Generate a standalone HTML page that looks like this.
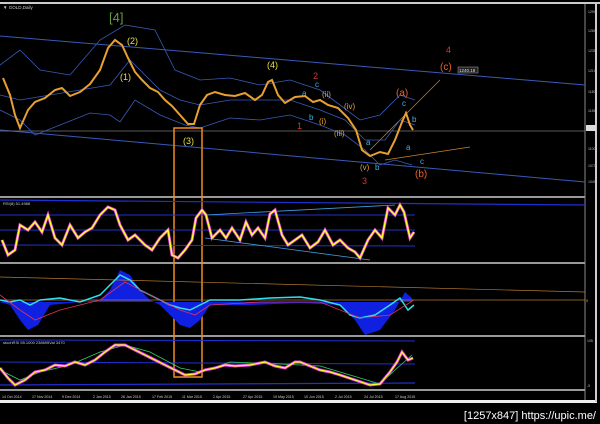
<!DOCTYPE html>
<html><head><style>
html,body{margin:0;padding:0;background:#000;width:600px;height:424px;overflow:hidden}
svg{display:block}
text{font-family:"Liberation Sans",sans-serif}
</style></head><body>
<svg width="600" height="424" viewBox="0 0 600 424">
<rect width="600" height="424" fill="#000"/>
<!-- frame -->
<rect x="0" y="2" width="600" height="2" fill="#ccc"/>
<rect x="0" y="400" width="597" height="3" fill="#eee"/>
<rect x="595" y="2" width="2" height="400" fill="#ccc"/>
<line x1="585" y1="4" x2="585" y2="400" stroke="#888" stroke-width="1"/>
<line x1="0" y1="197" x2="585" y2="197" stroke="#999" stroke-width="2"/>
<line x1="0" y1="263" x2="585" y2="263" stroke="#999" stroke-width="2"/>
<line x1="0" y1="336" x2="585" y2="336" stroke="#999" stroke-width="2"/>
<line x1="0" y1="390" x2="585" y2="390" stroke="#999" stroke-width="2"/>
<text x="3" y="9" font-size="4.5" fill="#ccc">▼ GOLD,Daily</text>
<!-- main panel channel -->
<line x1="0" y1="36" x2="585" y2="85" stroke="#3a5ab8" stroke-width="1"/>
<line x1="0" y1="130" x2="585" y2="182" stroke="#3a5ab8" stroke-width="1"/>
<line x1="0" y1="131" x2="585" y2="131" stroke="#777" stroke-width="0.7"/>
<line x1="385" y1="160" x2="470" y2="147" stroke="#c8842c" stroke-width="0.7"/>
<line x1="370" y1="150" x2="440" y2="80" stroke="#c8842c" stroke-width="0.7"/>
<!-- bollinger -->
<polyline fill="none" stroke="#3a5ab8" stroke-width="0.8" points="0,65 20,50 40,70 70,75 100,40 125,25 155,30 175,70 200,80 230,78 260,85 290,80 320,90 340,105 360,120 380,115 400,95 415,100"/>
<polyline fill="none" stroke="#3a5ab8" stroke-width="0.8" points="0,95 20,100 50,95 80,90 110,85 130,60 160,90 180,100 200,105 230,100 260,100 290,100 320,110 345,120 365,140 385,140 400,120 415,125"/>
<polyline fill="none" stroke="#3a5ab8" stroke-width="0.8" points="0,110 20,120 35,135 60,125 90,113 110,115 120,122 135,100 160,115 185,125 200,128 230,118 260,120 290,115 320,125 345,135 365,150 380,165 395,160 412,165"/>
<!-- price -->
<polyline fill="none" stroke="#e8a030" stroke-width="2" points="3,78 10,95 15,115 20,128 28,110 35,102 45,98 55,90 62,88 70,96 80,92 90,84 100,70 108,48 115,40 122,45 128,58 135,72 142,80 150,88 158,92 165,100 172,106 180,115 188,124 194,124 200,105 207,95 215,92 225,95 235,96 245,93 255,100 262,95 268,82 272,80 278,95 285,103 295,97 305,96 313,102 320,100 328,105 338,108 348,118 356,130 362,150 370,156 380,152 388,154 395,140 402,122 406,113 410,125 413,130"/>
<!-- wave labels -->
<text x="109" y="22" font-size="13" fill="#6a9a40" font-family="Liberation Serif">[4]</text>
<text x="127" y="44" font-size="9" fill="#e8e040">(2)</text>
<text x="120" y="80" font-size="9" fill="#e8e040">(1)</text>
<text x="183" y="144" font-size="9" fill="#e8e040">(3)</text>
<text x="267" y="68" font-size="9" fill="#e8e040">(4)</text>
<text x="313" y="79" font-size="9" fill="#e03030">2</text>
<text x="297" y="129" font-size="9" fill="#e03030">1</text>
<text x="362" y="184" font-size="9" fill="#e03030">3</text>
<text x="446" y="53" font-size="9" fill="#e03030">4</text>
<text x="440" y="70" font-size="10" fill="#ee6020">(c)</text>
<text x="396" y="96" font-size="10" fill="#ee6020">(a)</text>
<text x="415" y="177" font-size="10" fill="#ee6020">(b)</text>
<text x="322" y="97" font-size="8" fill="#e8a030">(ii)</text>
<text x="319" y="124" font-size="8" fill="#e8a030">(i)</text>
<text x="344" y="109" font-size="8" fill="#e8a030">(iv)</text>
<text x="334" y="136" font-size="8" fill="#e8a030">(iii)</text>
<text x="360" y="170" font-size="8" fill="#e8a030">(v)</text>
<g font-size="8" fill="#40b0e0">
<text x="302" y="96">a</text><text x="309" y="120">b</text><text x="315" y="87">c</text>
<text x="366" y="145">a</text><text x="375" y="170">b</text><text x="402" y="106">c</text>
<text x="412" y="122">b</text><text x="406" y="150">a</text><text x="420" y="164">c</text>
</g>
<rect x="458" y="67" width="20" height="6" fill="#222" stroke="#aaa" stroke-width="0.5"/>
<text x="459" y="72" font-size="4.5" fill="#ddd">1240.18</text>
<rect x="586" y="125" width="10" height="6" fill="#ddd"/>
<g font-size="3.5" fill="#bbb">
<text x="588" y="13">1290</text><text x="588" y="32">1265</text><text x="588" y="52">1235</text>
<text x="588" y="72">1210</text><text x="588" y="93">1180</text><text x="588" y="112">1155</text>
<text x="588" y="150">1100</text><text x="588" y="167">1070</text><text x="588" y="183">1045</text>
</g>
<!-- orange box -->
<rect x="174" y="128" width="28" height="249" fill="none" stroke="#f08a20" stroke-width="1.5"/>
<!-- RSI panel -->
<text x="3" y="205" font-size="4" fill="#ccc">RSI(8) 51.4988</text>
<line x1="0" y1="200" x2="585" y2="205" stroke="#2030d0" stroke-width="1.2"/>
<line x1="0" y1="215" x2="415" y2="215" stroke="#2030d0" stroke-width="1"/>
<line x1="0" y1="230" x2="415" y2="230" stroke="#2030d0" stroke-width="1"/>
<line x1="0" y1="245" x2="415" y2="246" stroke="#2030d0" stroke-width="1"/>
<line x1="205" y1="215" x2="395" y2="205" stroke="#40a0e0" stroke-width="0.8"/>
<line x1="205" y1="238" x2="370" y2="260" stroke="#40a0e0" stroke-width="0.8"/>
<polyline fill="none" stroke="#e040e0" stroke-width="3" points="2,240 8,255 15,250 20,225 28,230 35,222 42,232 48,215 55,238 62,245 70,225 78,238 85,232 92,228 100,215 108,207 115,210 120,225 128,240 135,235 145,245 152,250 160,238 168,230 172,255 178,258 185,250 192,240 196,218 202,210 206,215 212,238 220,230 226,238 232,228 240,240 246,222 252,235 258,228 265,238 270,214 275,210 282,235 288,245 295,240 302,235 310,248 318,242 325,230 333,245 340,240 348,248 355,252 360,258 368,240 375,230 382,238 388,208 395,215 400,205 404,212 410,238 414,232"/>
<polyline fill="none" stroke="#ffff30" stroke-width="1.5" points="2,240 8,255 15,250 20,225 28,230 35,222 42,232 48,215 55,238 62,245 70,225 78,238 85,232 92,228 100,215 108,207 115,210 120,225 128,240 135,235 145,245 152,250 160,238 168,230 172,255 178,258 185,250 192,240 196,218 202,210 206,215 212,238 220,230 226,238 232,228 240,240 246,222 252,235 258,228 265,238 270,214 275,210 282,235 288,245 295,240 302,235 310,248 318,242 325,230 333,245 340,240 348,248 355,252 360,258 368,240 375,230 382,238 388,208 395,215 400,205 404,212 410,238 414,232"/>
<!-- MACD panel -->
<path d="M0,302 L10,305 20,320 28,330 38,325 50,305 100,300 110,290 120,270 130,275 140,290 150,300 160,305 170,315 180,325 190,328 200,320 210,305 250,305 300,303 340,305 355,320 365,335 380,330 395,310 405,292 412,298 L412,302 L0,302 Z" fill="#1020e0"/>
<line x1="0" y1="277" x2="585" y2="292" stroke="#b07830" stroke-width="0.7"/>
<line x1="0" y1="300" x2="585" y2="300" stroke="#b07830" stroke-width="0.8"/>
<polyline fill="none" stroke="#30e0f0" stroke-width="1.5" points="0,300 10,302 20,300 30,305 40,300 60,298 80,302 100,295 110,285 120,275 130,280 140,290 150,295 160,300 170,305 180,308 190,310 200,305 210,300 240,300 270,298 300,297 320,300 340,305 350,315 360,318 375,315 390,305 400,298 408,310 414,305"/>
<polyline fill="none" stroke="#e03060" stroke-width="0.8" points="0,295 20,310 35,320 60,310 100,300 125,282 150,295 180,310 195,315 210,305 260,302 320,302 360,318 390,315 414,300"/>
<text x="586" y="302" font-size="4" fill="#e8a030">0</text>
<!-- Stoch panel -->
<text x="3" y="344" font-size="4" fill="#ccc">stochRSI 55.1000 238695Val 3470</text>
<line x1="0" y1="340" x2="415" y2="341" stroke="#2030d0" stroke-width="1"/>
<line x1="0" y1="362" x2="415" y2="364" stroke="#2030d0" stroke-width="1"/>
<line x1="0" y1="385" x2="415" y2="383" stroke="#2030d0" stroke-width="1.2"/>
<polyline fill="none" stroke="#30d060" stroke-width="0.8" points="0,370 20,380 40,372 70,365 100,352 125,345 150,352 180,368 200,372 230,362 280,364 320,366 350,375 380,384 395,370 412,355"/>
<polyline fill="none" stroke="#e040e0" stroke-width="3" points="0,368 8,378 15,385 25,380 35,372 45,370 55,365 65,366 75,362 85,365 95,360 105,352 115,345 125,345 135,350 145,355 155,360 165,365 175,370 185,375 195,374 205,370 215,368 225,365 235,366 250,365 265,362 275,366 285,368 295,362 300,362 310,366 320,370 330,372 340,375 355,380 370,385 380,384 390,372 397,362 402,352 408,360 413,358"/>
<polyline fill="none" stroke="#ffff30" stroke-width="1.2" points="0,368 8,378 15,385 25,380 35,372 45,370 55,365 65,366 75,362 85,365 95,360 105,352 115,345 125,345 135,350 145,355 155,360 165,365 175,370 185,375 195,374 205,370 215,368 225,365 235,366 250,365 265,362 275,366 285,368 295,362 300,362 310,366 320,370 330,372 340,375 355,380 370,385 380,384 390,372 397,362 402,352 408,360 413,358"/>
<text x="587" y="342" font-size="3.5" fill="#bbb">105</text>
<text x="587" y="387" font-size="3.5" fill="#bbb">-5</text>
<!-- dates -->
<g font-size="3.6" fill="#ccc">
<text x="2" y="398">14 Oct 2014</text><text x="32" y="398">17 Nov 2014</text><text x="62" y="398">9 Dec 2014</text>
<text x="93" y="398">2 Jan 2015</text><text x="121" y="398">26 Jan 2015</text><text x="152" y="398">17 Feb 2015</text>
<text x="182" y="398">11 Mar 2015</text><text x="213" y="398">2 Apr 2015</text><text x="243" y="398">27 Apr 2015</text>
<text x="273" y="398">19 May 2015</text><text x="304" y="398">10 Jun 2015</text><text x="335" y="398">2 Jul 2015</text>
<text x="364" y="398">24 Jul 2015</text><text x="395" y="398">17 Aug 2015</text>
</g>
<text x="596" y="419" font-size="11" fill="#fff" text-anchor="end">[1257x847] https://upic.me/</text>
</svg>
</body></html>
